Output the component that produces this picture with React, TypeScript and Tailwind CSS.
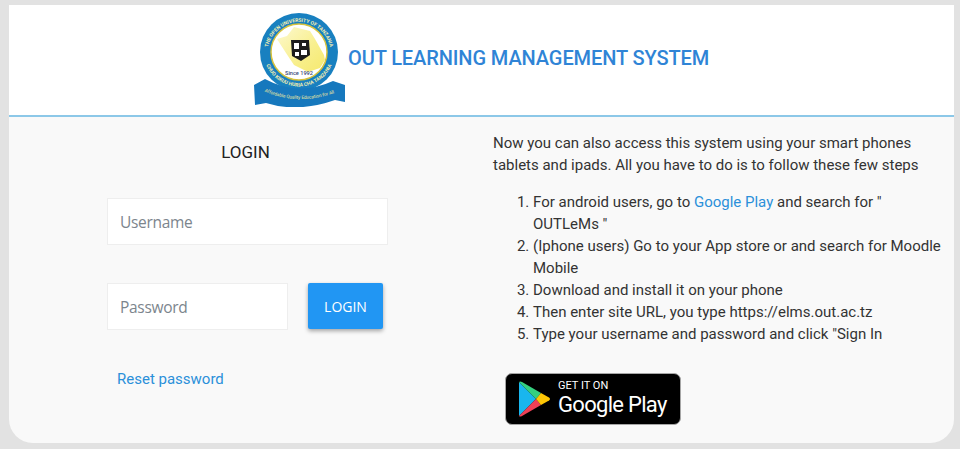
import { useId } from 'react'

const Logo = () => {
  const id = useId()
  return (
    <svg width="92" height="94" viewBox="0 0 92 94" className="shrink-0">
      <defs>
        <linearGradient id={`${id}map`} x1="0" y1="0" x2="1" y2="1">
          <stop offset="0" stopColor="#fdf9d0" />
          <stop offset="0.6" stopColor="#f8ef8c" />
          <stop offset="1" stopColor="#f6e96e" />
        </linearGradient>
        <path id={`${id}top`} d="M15 50 A 31.5 31.5 0 1 1 75 50" />
        <path id={`${id}bot`} d="M10 44 A 35.5 35.5 0 0 0 80 44" />
        <path id={`${id}ban`} d="M5 76 Q 44 95 86 78" />
      </defs>
      <circle cx="45" cy="39" r="39" fill="#1880c0" />
      <circle cx="45" cy="39" r="28" fill="#fff" stroke="#d8c23c" strokeWidth="1.5" />
      <text fontSize="5" fontWeight="700" fill="#f3eeb0" fontFamily="Roboto, sans-serif">
        <textPath href={`#${id}top`} startOffset="50%" textAnchor="middle">THE OPEN UNIVERSITY OF TANZANIA</textPath>
      </text>
      <text fontSize="5" fontWeight="700" fill="#f3eeb0" fontFamily="Roboto, sans-serif">
        <textPath href={`#${id}bot`} startOffset="50%" textAnchor="middle">CHUO KIKUU HURIA CHA TANZANIA</textPath>
      </text>
      <path d="M23 26 L33 23 L40 14 L56 18 L61 26 L70 42 L71 47 L66 55 L54 59 L40 52 L32 40 Z" fill={`url(#${id}map)`} />
      <path d="M37 27 L55 27 L56 42 L47 48 L38 43 Z" fill="#1c1c1c" />
      <path d="M40 30 h5 v6 h-5z M47 37 h6 v5 h-6z M41 39 h4 v4 h-4z M48 30 h4 v3 h-4z" fill="#fff" />
      <text x="45" y="62" textAnchor="middle" fontSize="5.6" fontWeight="500" fill="#3a4a7a" fontFamily="Roboto, sans-serif">Since 1992</text>
      <path d="M0 72 L11 66 Q44 84 79 68 L91 72 L91 89 L81 87 Q44 100 12 90 L1 92 Z" fill="#1678bd" />
      <text fontSize="4.6" fill="#f6ee9c" fontFamily="Roboto, sans-serif">
        <textPath href={`#${id}ban`} startOffset="50%" textAnchor="middle">Affordable Quality Education for All</textPath>
      </text>
    </svg>
  )
}

const PlayBadge = () => (
  <a className="flex items-center w-[176px] h-[52px] bg-black rounded-[7px] border border-[#a6a6a6] pl-[12px]">
    <svg width="32" height="36" viewBox="0 0 32 36" className="shrink-0 mr-[8px]">
      <path d="M1 1 L18 18 L1 35 Z" fill="#19b6ee" />
      <path d="M1 1 Q2 0 4 1 L23 12 L18 18 Z" fill="#35d07f" />
      <path d="M1 35 Q2 36 4 35 L23 24 L18 18 Z" fill="#ee4056" />
      <path d="M23 12 L31 16.5 Q33 18 31 19.5 L23 24 L18 18 Z" fill="#fdc605" />
    </svg>
    <div className="flex flex-col text-white font-['Roboto',sans-serif] mt-[-1px]">
      <span className="text-[11px] leading-[13px]">GET IT ON</span>
      <span className="text-[22px] leading-[26px] tracking-[-0.7px]">Google Play</span>
    </div>
  </a>
)

const steps = [
  <>For android users, go to <a className="text-[#2b90d9]">Google Play</a> and search for " OUTLeMs "</>,
  <>(Iphone users) Go to your App store or and search for Moodle Mobile</>,
  <>Download and install it on your phone</>,
  <>Then enter site URL, you type https://elms.out.ac.tz</>,
  <>Type your username and password and click "Sign In</>,
]

export default function App() {
  return (
    <div className="w-[960px] h-[449px] bg-[#e2e2e2] pt-[5px] pl-[9px] font-['Roboto',sans-serif] text-[#212529] overflow-hidden">
      <div className="w-[945px] h-[438px] bg-[#f9f9f9] rounded-b-[24px] overflow-hidden">
        <header className="h-[112px] bg-white border-b-2 border-[#8cc8e8] flex items-center pl-[245px]">
          <Logo />
          <h1 className="ml-[2px] text-[20px] tracking-[-0.1px] font-medium text-[#2f84d6] mb-[4px]">OUT LEARNING MANAGEMENT SYSTEM</h1>
        </header>
        <div className="flex">
          <div className="w-[484px] pl-[98px]">
            <h2 className="w-[277px] mt-[24px] text-center text-[17px] leading-[22px] text-[#222]">LOGIN</h2>
            <input placeholder="Username" className="block mt-[35px] w-[281px] h-[47px] px-[12px] bg-white border border-[#eeeeee] text-[15.5px] tracking-[-0.3px] font-['Open_Sans',sans-serif] outline-none placeholder:text-[#7c858d]" />
            <div className="flex items-start mt-[38px] gap-[20px]">
              <input placeholder="Password" className="block w-[181px] h-[47px] px-[12px] bg-white border border-[#eeeeee] text-[15.5px] tracking-[-0.3px] font-['Open_Sans',sans-serif] outline-none placeholder:text-[#7c858d]" />
              <button className="w-[75px] h-[46px] bg-[#2196f3] rounded-[2px] text-white text-[14px] font-['Open_Sans',sans-serif] shadow-[0_2px_4px_rgba(0,0,0,0.35)]">LOGIN</button>
            </div>
            <a className="block mt-[38px] ml-[10px] text-[15px] leading-[22px] text-[#2b90d9]">Reset password</a>
          </div>
          <div className="flex-1 pt-[15px] text-[15px] leading-[22px] text-[#333]">
            <p className="w-[440px]">Now you can also access this system using your smart phones tablets and ipads. All you have to do is to follow these few steps</p>
            <ol className="list-decimal pl-[40px] mt-[15px] w-[452px]">
              {steps.map((s, i) => (
                <li key={i}>{s}</li>
              ))}
            </ol>
            <div className="mt-[28px] ml-[12px]">
              <PlayBadge />
            </div>
          </div>
        </div>
      </div>
    </div>
  )
}
